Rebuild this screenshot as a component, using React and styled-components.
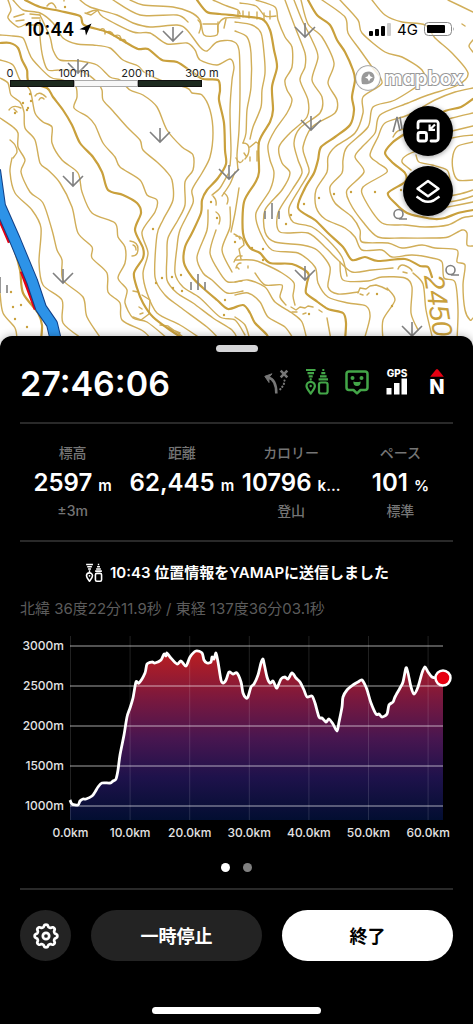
import React from 'react';
import styled, { createGlobalStyle } from 'styled-components';

const GlobalStyle = createGlobalStyle`
  * { box-sizing: border-box; }
  body {
    margin: 0;
    background: #000;
    font-family: Inter, "Noto Sans CJK JP", sans-serif;
  }
  button { font-family: inherit; cursor: pointer; }
`;

const green = '#43a648';
const red = '#e60012';
const contour = '#c9a03c';
const grey = '#757575';

const Screen = styled.div`
  display: flex;
  flex-direction: column;
  min-height: 100vh;
`;

const MapArea = styled.section`
  position: relative;
  flex: 1 0 348px;
  margin-bottom: -12px;
  background: #fff;
  overflow: hidden;
`;

const MapDrawing = styled.svg`
  position: absolute;
  inset: 0;
  width: 100%;
  height: 100%;
`;

const StatusBar = styled.div`
  position: relative;
  display: flex;
  align-items: center;
  justify-content: space-between;
  height: 58px;
  padding: 0 18px 0 25px;
  color: #000;
`;

const Clock = styled.div`
  display: flex;
  align-items: center;
  gap: 5px;
  font-size: 18px;
  font-weight: 600;
`;

const Signal = styled.div`
  display: flex;
  align-items: center;
  gap: 6px;
  font-size: 15px;
`;

const MapTop = styled.div`
  position: relative;
  display: flex;
  justify-content: space-between;
  padding: 6px 10px 0 10px;
`;

const ScaleBar = styled.div`
  display: flex;
  padding-top: 2px;
`;

const Segment = styled.div`
  width: 64px;
  font-size: 11px;
  line-height: 14px;
  color: #222;
  span {
    display: block;
    width: 64px;
    margin-left: -32px;
    text-align: center;
    white-space: nowrap;
    text-shadow: 0 0 2px #fff, 0 0 2px #fff;
  }
  &::after {
    content: '';
    display: ${({ last }) => last ? 'none' : 'block'};
    height: 5px;
    border: 1px solid ${({ dark }) => dark ? '#111' : '#aaa'};
    background: ${({ dark }) => dark ? '#1d2a1f' : '#f7f7f7'};
  }
`;

const Mapbox = styled.a`
  display: flex;
  align-items: center;
  gap: 3px;
  height: 28px;
  color: #fff;
  text-decoration: none;
  font-size: 20px;
  font-weight: 600;
  font-feature-settings: "cv11";
  -webkit-text-stroke: 2px #999;
  paint-order: stroke fill;
`;

const MapButtons = styled.div`
  position: relative;
  display: flex;
  flex-direction: column;
  align-items: flex-end;
  gap: 10px;
  padding: 14px 20px 0;
`;

const MapButton = styled.button`
  display: flex;
  align-items: center;
  justify-content: center;
  width: 50px;
  height: 50px;
  padding: 0;
  border: 0;
  border-radius: 50%;
  background: #000;
  box-shadow: 0 1px 5px rgba(0, 0, 0, 0.4);
`;

const Sheet = styled.main`
  position: relative;
  padding: 9px 20px 10px;
  border-radius: 12px 12px 0 0;
  background: #000;
  color: #fff;
  box-shadow: 0 0 8px rgba(0, 0, 0, 0.3);
`;

const Handle = styled.div`
  width: 42px;
  height: 7px;
  margin: 0 auto;
  border-radius: 4px;
  background: #d5d5d7;
`;

const Header = styled.header`
  display: flex;
  align-items: center;
  justify-content: space-between;
  height: 70px;
  border-bottom: 2px solid #292929;
  box-sizing: content-box;
`;

const Timer = styled.div`
  padding-bottom: 8px;
  font-size: 34px;
  font-weight: 600;
`;

const StatusIcons = styled.div`
  display: flex;
  gap: 12px;
  padding: 0 2px 10px 0;
  svg { overflow: visible; }
`;

const Stats = styled.dl`
  display: grid;
  grid-template-columns: repeat(4, minmax(0, 1fr));
  height: 116px;
  margin: 0 -2px;
  padding-top: 16px;
  text-align: center;
`;

const Stat = styled.div`
  display: flex;
  flex-direction: column;
  align-items: center;
`;

const Label = styled.dt`
  font-size: 14px;
  font-weight: 500;
  line-height: 26px;
  color: ${grey};
`;

const Value = styled.dd`
  margin: 0;
  font-size: 24px;
  font-weight: 600;
  line-height: 34px;
  white-space: nowrap;
  small { font-size: 15px; }
`;

const Note = styled.dd`
  margin: 0;
  font-size: 14px;
  font-weight: 500;
  line-height: 16px;
  color: ${grey};
`;

const Rule = styled.hr`
  height: 2px;
  margin: 0;
  border: 0;
  background: #292929;
`;

const Message = styled.p`
  display: flex;
  align-items: center;
  justify-content: center;
  gap: 6px;
  margin: 19px 0 0;
  font-size: 15px;
  font-weight: 600;
  line-height: 24px;
  white-space: nowrap;
`;

const Coordinates = styled.p`
  margin: 13px 0 0;
  font-size: 15px;
  line-height: 22px;
  color: #5c5c5c;
`;

const Chart = styled.svg`
  display: block;
  width: 100%;
  margin-top: 10px;
  text {
    font-size: 12px;
    font-weight: 500;
    fill: #e4e4e4;
  }
`;

const Pager = styled.div`
  display: flex;
  justify-content: center;
  gap: 13px;
  padding: 19px 0 16px;
`;

const Dot = styled.button`
  width: 9px;
  height: 9px;
  padding: 0;
  border: 0;
  border-radius: 50%;
  background: ${({ active }) => active ? '#fff' : '#808080'};
`;

const Actions = styled.div`
  display: flex;
  gap: 20px;
  padding: 20px 0 46px;
`;

const RoundButton = styled.button`
  display: flex;
  align-items: center;
  justify-content: center;
  flex: none;
  width: 51px;
  height: 51px;
  padding: 0;
  border: 0;
  border-radius: 50%;
  background: #232323;
`;

const PillButton = styled.button`
  flex: 1;
  height: 51px;
  padding: 0 0 2px;
  border: 0;
  border-radius: 26px;
  font-size: 18px;
  font-weight: 600;
  background: ${({ primary }) => primary ? '#fff' : '#232323'};
  color: ${({ primary }) => primary ? '#000' : '#fff'};
`;

const HomeIndicator = styled.div`
  width: 169px;
  height: 7px;
  margin: 0 auto;
  border-radius: 4px;
  background: #fff;
`;

// Smooth curve through a list of "x,y" points
const curve = list => {
  const p = list.split(' ').map(s => s.split(',').map(Number));
  let d = `M${p[0]}`;
  for (let i = 0; i < p.length - 1; i++) {
    const a = p[i - 1] || p[i], b = p[i], c = p[i + 1], e = p[i + 2] || c;
    const c1 = [b[0] + (c[0] - a[0]) / 7, b[1] + (c[1] - a[1]) / 7];
    const c2 = [c[0] - (e[0] - b[0]) / 7, c[1] - (e[1] - b[1]) / 7];
    d += `C${c1} ${c2} ${c}`;
  }
  return d;
};

const mainContours = [
  '25,0 40,7 60,11 80,16 84,25 107,32 125,42 138,49 148,49 162,60 177,62 192,72 203,79 218,80 220,90 219,100 224,123 225,150 226,164 218,178 207,190 202,200 201,213 192,233 185,247 184,263 192,277 203,288 217,300 228,309 243,305 250,313 255,323 267,335 270,345',
  '0,43 10,43 18,48 22,60 27,70 29,82 47,88 53,97 63,110 72,125 80,143 93,157 102,172 108,190 123,195 137,203 141,213 135,230 143,248 143,258 134,273 137,288 143,303 153,317 170,330 184,339',
  '197,0 207,12 220,14 240,16 262,19 270,30 274,50 277,67 272,87 273,110 270,122 259,142 259,172 255,183 244,202 243,233 250,248 260,253 270,263 292,264 308,273 307,283 306,293 315,300 328,309 343,313 346,323 345,340',
  '308,0 317,15 330,25 337,40 345,52 353,70 355,80 352,97 354,110 350,125 335,137 321,147 318,160 314,173 305,188 298,208 315,220 328,233 343,247 352,260 365,257 378,261 405,259 420,266 428,267 432,277',
  '473,99 461,107 445,111 425,122 403,135 392,143 385,153 393,163 405,173 405,182 388,193 395,203 407,213 422,217 435,219 445,218 458,213 473,210',
  '0,222 13,247 20,270 23,293 38,313 42,325 41,340'
];

const contours = [
  '13,0 23,10 40,13 53,23 63,38 77,44 93,45 110,48 123,60 138,66 144,72 160,80 187,88 192,93 202,95 210,110 213,133 210,157 202,173 192,190 193,203 180,230 177,247 175,273 183,287 200,298 220,317 235,320 245,335',
  '40,15 50,37 53,50 60,60 80,61 97,65 110,77 120,80 130,90 143,95 157,107 167,130 182,147 193,155 193,170 185,182 185,205 178,220 168,238 167,255 167,280 177,293 193,303 213,318 232,330 238,340',
  '40,20 40,37 43,58 48,70 60,70 83,72 97,82 102,90 103,100 112,110 127,127 140,140 143,150 157,162 166,171 172,180 173,200 163,220 157,235 155,277 165,295 180,307 207,327 220,340',
  '0,35 13,36 23,38 28,50 33,60 50,77 62,80 75,85 77,97 74,108 88,117 95,125 103,143 115,157 120,167 140,180 147,195 157,200 155,212 142,232 148,253 143,273 147,293 157,313 180,325 203,340',
  '0,60 13,65 20,80 30,90 35,113 43,122 52,127 52,143 62,160 78,173 82,192 92,213 115,223 118,237 125,247 125,263 118,278 127,290 125,303 133,318 147,322 167,338',
  '0,78 8,83 11,95 20,102 24,112 25,128 35,140 40,163 48,170 60,183 72,207 78,233 92,247 92,258 107,273 108,292 120,303 122,320 143,331 152,340',
  '0,118 13,127 18,133 18,147 25,160 21,172 30,192 43,203 52,230 57,250 62,260 63,280 83,297 87,317 102,340',
  '12,158 10,172 15,193 32,210 41,228 39,262 43,285 62,300 63,323 84,340',
  '0,293 3,313 15,328 17,340',
  '87,13 97,10 103,17 133,32 150,33 167,44 187,43 195,50 200,60 217,65 230,59 234,67 232,80 230,110 231,150 230,166',
  '80,0 90,7 117,15 133,23 150,27 177,25 187,30 200,47 207,51 217,42 232,41 239,50 240,90 239,130 237,155 238,170',
  '113,0 140,15 177,15 188,22',
  '130,0 143,5 173,7 190,12 200,20 204,35 217,35 218,25 225,18 240,18',
  '213,0 227,6 238,10 240,14',
  '235,22 252,25 261,33 264,53 265,73 262,90 261,107 253,127 250,139',
  '235,31 247,37 251,53 251,87 247,110 246,133 243,143',
  '240,3 256,6 265,16 276,16',
  '256,0 275,7 278,20 285,37 292,47 292,67 285,80 287,90 292,100 287,113 275,130 268,145 270,160 274,173 270,190 256,213 260,232 272,250 298,253 315,267 318,283 328,297 348,303 366,306 370,317 364,340',
  '285,0 295,27 305,53 305,67 300,80 308,100 307,117 290,133 279,147 282,163 290,173 282,190 265,210 265,232 275,242 302,245 317,250 330,267 328,287 338,294 358,292',
  '294,0 302,20 312,40 318,57 312,80 322,97 320,113 300,128 294,143 298,160 302,173 292,190 278,213 280,232 308,233 325,247 338,260 352,272 372,270 393,268',
  '301,0 308,24 322,37 334,63 328,83 337,100 335,113 312,127 303,147 306,160 309,172 300,188 289,208 293,222 312,227 328,240 342,257 347,276',
  '322,0 345,17 348,33 360,50 372,67 382,83 363,97 363,113 355,133 335,147 328,157 327,172 316,190 316,207 325,219 345,228 355,237 362,250 382,250 392,257 412,255 432,258 442,262 444,278 455,282 458,310 457,340',
  '340,0 358,20 362,33 385,52 402,57 422,70 422,82 395,100 373,107 368,127 347,147 343,160 342,173 330,187 335,203 352,217 360,230 362,242 388,243 402,248 422,245 435,248 457,250 457,262 465,265 463,285 465,310 470,320 473,318',
  '372,0 385,15 402,22 425,25 435,38 452,53 468,73 458,85 428,95 408,103 380,115 375,133 362,147 355,157 364,172 347,190 350,203 363,222 378,237 402,238 432,238 448,237 462,230 467,233 467,245 473,246',
  '448,0 473,12',
  '473,40 469,46 473,52',
  '473,88 455,92 435,100 408,115 385,123 378,137 370,155 378,163 387,172 363,187 365,200 382,223 405,225 425,227 448,225 462,218 473,216',
  '473,113 452,118 430,125 400,130 393,137',
  '473,126 452,131',
  '473,135 452,138 425,148 407,155 402,162 411,170',
  '473,142 458,146 453,155 453,170 458,180 473,180',
  '416,155 419,162 432,165 447,170 450,180',
  '448,196 460,194 473,190',
  '448,202 460,200 473,196',
  '442,208 458,205 473,202',
  '235,282 248,280 265,287 275,302 292,313 302,322 307,340',
  '235,295 248,293 260,302 268,317 285,327 294,340',
  '235,317 245,325 250,340',
  '235,260 252,260 262,263 282,273 294,283 293,296 295,305',
  '255,273 265,285 282,285 280,297 286,305',
  '340,262 343,280 368,281 382,277 405,278 412,287 411,313 418,330',
  '387,288 395,300 383,320 383,340',
  '413,273 423,284 426,310 433,340',
  '327,318 331,340',
  '208,210 207,230 197,257 203,273 212,280 227,293 243,291',
  '216,230 210,253 220,273 228,282 242,281',
  '230,207 230,227 222,250 232,272',
  '239,188 235,213 231,232',
  '222,196 230,184 235,172',
  '212,195 220,188 228,174',
  '8,0 11,10 8,18 18,27 26,24',
  '10,140 15,145 17,152 13,158'
];

// short hachures, rock edges and hollows
const marks = 'M47,6q5-7 9,2M64,0v1M85,13l6,2 7-5M100,30q5-4 5,4M105,33q6-4 9,3M114,36q7-3 7,4M120,40q6-2 6,3'
  + 'M14,17l10,-3M16,21l8-1M30,14l10,1M32,18l8,0M27,25h13M35,96q4-6 11,1M39,100q2-4 5-1M9,110q4-6 12-2M14,109l3,3'
  + 'M130,241q8,1 8,8t-6,7M133,245q3,1 3,5M133,291l5,1M142,295l8,5-1,14-8,6-8-3M139,307l3,2M140,314l3-1M160,325l8,1 14,10M168,328l12,5'
  + 'M213,196q4,4 3,9M216,212q6,4 3,12M224,193q6,4 3,11M234,234q5,2 6,5M234,262q3-8 8-6M236,268q1-5 5-5'
  + 'M198,20q5,4 1,13M203,24h14M218,32v-10M224,28l2-9M238,11v5M243,11v6M249,12v6M257,12v7M264,13v7M270,11v8'
  + 'M243,143q6,0 6,6t-4,10M250,147l6,-5 3,2M244,153l2,3M250,157v4M257,151v10M236,158q4,8 7,2'
  + 'M236,236q8,0 8,9l-5,4 2,10M237,267l2,2M248,266v2M291,307l5,3 4-3 5,1 3-2 5,1M292,312h5M303,314l3-1M319,310l3,2M319,303l6,4'
  + 'M358,293l2-5 6,1 4-3 6-1 6,2 6,3M360,294l3,1M367,295l2-2M398,269q2-6 8-3t6,5M403,272l4,1M465,26l-3-2';

const dots = '23,103 28,108 31,101 27,110 15,113 30,94 65,7 153,229 162,278 172,277 181,275 173,288 182,291 211,202 217,218 156,283 225,300 224,315 13,307 21,305 15,319 27,327 11,292 304,204 319,198 334,194 351,192 375,192 291,215 286,224 263,249 263,260 401,190 235,242 252,248 309,314 377,294 392,306';

const grass = [[173, 34], [78, 66], [160, 135], [73, 179], [229, 172], [63, 276], [305, 30], [311, 123], [305, 273], [412, 329]];
const reeds = [[198, 282], [272, 211], [0, 285]];
const broadleaf = [[399, 214], [451, 270]];
const river = 'M-5,170L0,206 15,240 32,281 41,308 52,324 57,345';

const profile = '70,800 72,804 78,805 80,801 83,799 86,799 92,796 95,792 98,787 102,783 110,783 113,781 116,779 118,770 120,755 124,735 127,717 130,708 133,698 136,682 139,683 145,673 147,664 152,662 155,663 161,660 164,654 166,656 167,653 170,657 177,664 181,661 186,666 190,657 196,651 202,653 204,660 207,663 211,662 212,657 214,659 216,653 218,662 221,680 223,683 226,680 229,672 233,674 237,673 241,682 243,693 246,698 248,697 251,687 254,684 258,675 261,663 263,659 264,663 267,677 270,683 273,681 275,685 277,688 281,679 285,677 288,679 292,673 296,678 300,682 304,690 307,697 312,696 315,703 319,717 322,718 326,722 329,719 333,724 337,731 339,722 342,707 343,697 347,690 353,685 358,682 362,680 366,687 368,693 371,703 376,714 379,714 382,717 387,714 389,705 393,702 395,697 400,688 403,682 406,668 408,673 411,687 414,694 418,687 422,673 425,667 428,672 432,677 437,678 443,678';

const elevations = [3000, 2500, 2000, 1500, 1000];
const distances = [0, 10, 20, 30, 40, 50, 60];

const stats = [
  { label: '標高', value: '2597', unit: 'm', note: '±3m' },
  { label: '距離', value: '62,445', unit: 'm' },
  { label: 'カロリー', value: '10796', unit: 'k...', note: '登山' },
  { label: 'ペース', value: '101', unit: '%', note: '標準' }
];

const TopoMap = () => (
  <MapDrawing viewBox="0 0 473 348" preserveAspectRatio="xMidYMin slice" fill="none" aria-hidden="true">
    <g stroke={contour} strokeLinejoin="round" strokeLinecap="round">
      <g strokeWidth="1.400" opacity="0.85">
        {contours.map((c, i) => <path key={i} d={curve(c)} />)}
        <path d={marks} />
      </g>
      <g strokeWidth="2.200">
        {mainContours.map((c, i) => <path key={i} d={curve(c)} />)}
      </g>
    </g>
    <g fill={contour}>
      {dots.split(' ').map(p => <circle key={p} cx={p.split(',')[0]} cy={p.split(',')[1]} r="1.200" />)}
    </g>
    <text transform="translate(424 276) rotate(81)" fill={contour} fontFamily="Liberation Sans" fontStyle="italic" fontSize="28">2450</text>
    <g stroke="#808080" strokeWidth="1.600">
      {grass.map(([x, y], i) => <path key={i} transform={`translate(${x} ${y})`} d="M0,-7V7M-10,-3L0,7L10,-3" />)}
      {reeds.map(([x, y], i) => <path key={i} transform={`translate(${x} ${y})`} d="M0,-8V8M-7,0V8M7,0V8" />)}
      {broadleaf.map(([x, y], i) => <path key={i} transform={`translate(${x} ${y})`} d="M4,0a4.5,4.5 0 1 0-9,0a4.5,4.5 0 1 0 9,0M0,5H8" />)}
      <path d="M393,132l4-15 3,14M400,117l2,12" />
    </g>
    <path d="M-2,206L13,241M25,270L39,308" stroke={red} strokeWidth="11" />
    <path d={river} stroke="#123f86" strokeWidth="12" strokeLinejoin="round" />
    <path d={river} stroke="#2d93e8" strokeWidth="10" strokeLinejoin="round" />
  </MapDrawing>
);

const BeaconIcon = ({ size = 28, color = green }) => (
  <svg width={size} height={size} viewBox="0 0 28 28" fill="none" stroke={color} strokeWidth="2.200" aria-hidden="true">
    <path d="M3,2h9.500M4.500,5.200h6.500M5.700,8.400h4M6.700,11.400h2M19.300,2h2M18.300,5.200h4M17,8.400h6.600M15.600,11.400h9.400" />
    <path d="M7.700,25.500C5.500,22.500 3.500,20.500 3.500,18a4.200,4.200 0 0 1 8.400,0C11.900,20.500 9.900,22.500 7.700,25.500Z" strokeLinejoin="round" />
    <circle cx="7.700" cy="18" r="1.200" fill={color} stroke="none" />
    <rect x="16" y="14.500" width="8.600" height="11" rx="2" />
  </svg>
);

const RouteIcon = () => (
  <svg width="28" height="28" viewBox="0 0 28 28" fill="none" stroke="#777" strokeWidth="2.600" aria-hidden="true">
    <path d="M5,9.500C10,10.500 13.300,15 13.300,25.500" />
    <path d="M1.800,8.300L9,5.800 5.800,9.600 6,14.500Z" fill="#777" strokeWidth="1" strokeLinejoin="round" />
    <path d="M17.700,2.700l6.600,6.600M24.300,2.700l-6.600,6.600" />
    <path d="M21.500,12.500C21.500,17.500 18,20 15.500,23.500" strokeWidth="2.200" strokeLinecap="round" strokeDasharray="0.100 3.200" />
  </svg>
);

const FaceIcon = () => (
  <svg width="28" height="28" viewBox="0 0 28 28" fill="none" aria-hidden="true">
    <path d="M6,3.500H22A2.500,2.500 0 0 1 24.500,6V19.500A2.500,2.500 0 0 1 22,22H17.500L14,25.300 10.500,22H6A2.500,2.500 0 0 1 3.500,19.500V6A2.500,2.500 0 0 1 6,3.500Z" stroke={green} strokeWidth="2.500" strokeLinejoin="round" />
    <circle cx="9.500" cy="10" r="2" fill={green} />
    <circle cx="18.500" cy="10" r="2" fill={green} />
    <path d="M10.300,13.500q3.700,1 7.400,0a3.700,4.500 0 0 1-7.400,0Z" fill={green} />
  </svg>
);

const GpsIcon = () => (
  <svg width="28" height="28" viewBox="0 0 28 28" fill="#fff" aria-label="GPS">
    <text x="14" y="9" textAnchor="middle" fontSize="10" fontWeight="800">GPS</text>
    <rect x="3.500" y="20" width="5" height="6.500" />
    <rect x="11" y="15" width="5.500" height="11.500" />
    <rect x="18.500" y="10.500" width="5.500" height="16" />
  </svg>
);

const NorthIcon = () => (
  <svg width="28" height="28" viewBox="0 0 28 28" fill="#fff" aria-label="N">
    <path d="M13,1.500q1-.8 2,0L20.800,8.700H7.200Z" fill={red} />
    <text x="14" y="26" textAnchor="middle" fontSize="20" fontWeight="800">N</text>
  </svg>
);

const gear = (() => {
  const pts = [];
  for (let i = 0; i <= 96; i++) {
    const a = i / 96 * Math.PI * 2;
    const r = 10.2 + 1.2 * Math.tanh(1.8 * Math.cos(8 * a));
    pts.push(`${(14 + r * Math.sin(a)).toFixed(2)},${(14 - r * Math.cos(a)).toFixed(2)}`);
  }
  return `M${pts.join('L')}Z`;
})();

const ElevationChart = () => {
  const line = curve(profile);
  return (
    <Chart viewBox="20 630 433 214" role="img" aria-label="標高">
      <defs>
        <linearGradient id="altitude" gradientUnits="userSpaceOnUse" x1="0" y1="650" x2="0" y2="820">
          <stop offset="0" stopColor="#bd1e20" />
          <stop offset="0.3" stopColor="#77183f" />
          <stop offset="0.52" stopColor="#481650" />
          <stop offset="0.75" stopColor="#1e124b" />
          <stop offset="1" stopColor="#020e31" />
        </linearGradient>
      </defs>
      <path d={`${line}V820H70Z`} fill="url(#altitude)" />
      {distances.map((km, i) => (
        <g key={km}>
          <rect x={70 + i * 59.6} y="636" width="1" height="184" fill="#fff" opacity="0.13" />
          <text x={70.5 + i * 59.6} y="837" textAnchor="middle">{km.toFixed(1)}km</text>
        </g>
      ))}
      {elevations.map((m, i) => (
        <g key={m}>
          <rect x="70" y={645 + i * 40} width="373" height="2" fill="#fff" opacity="0.32" />
          <text x="64" y={650 + i * 40} textAnchor="end">{m}m</text>
        </g>
      ))}
      <path d={line} fill="none" stroke="#fff" strokeWidth="2.800" strokeLinejoin="round" />
      <circle cx="443" cy="678" r="7.500" fill={red} stroke="#fff" strokeWidth="2.500" />
    </Chart>
  );
};

const App = () => (
  <React.Fragment>
    <GlobalStyle />
    <Screen>
      <MapArea>
        <TopoMap />
        <StatusBar>
          <Clock>
            10:44
            <svg width="13" height="13" viewBox="0 0 13 13" aria-hidden="true"><path d="M12.500,.5L7,12.500 6,7 .5,6.200Z" /></svg>
          </Clock>
          <Signal>
            <svg width="22" height="13" viewBox="0 0 22 13" aria-hidden="true">
              <rect y="8" width="4" height="5" rx="1" />
              <rect x="6" y="6" width="4" height="7" rx="1" />
              <rect x="12" y="3" width="4" height="10" rx="1" />
              <rect x="18" width="4" height="13" rx="1" fill="#ccc" />
            </svg>
            4G
            <svg width="31" height="14" viewBox="0 0 31 14" aria-hidden="true">
              <rect x=".5" y=".5" width="27" height="13" rx="4" fill="#fff" fillOpacity=".5" stroke="#888" />
              <rect x="3" y="3" width="18" height="8" rx="1" />
              <path d="M29,5q1.500,2 0,4Z" fill="#888" />
            </svg>
          </Signal>
        </StatusBar>
        <MapTop>
          <ScaleBar>
            <Segment dark><span>0</span></Segment>
            <Segment><span>100 m</span></Segment>
            <Segment dark><span>200 m</span></Segment>
            <Segment last><span>300 m</span></Segment>
          </ScaleBar>
          <Mapbox href="#mapbox">
            <svg width="26" height="26" viewBox="0 0 26 26" aria-hidden="true">
              <circle cx="13" cy="13" r="12" fill="#fff" fillOpacity=".8" stroke="#999" strokeWidth="1.500" />
              <path d="M7,19C5,11 8,6.500 14,6.500a5.800,5.800 0 0 1 5.500,6C19,18 14,20 7,19Z" fill="#999" />
              <path d="M14,8.500l1.300,2.700 2.700,1.300-2.700,1.300L14,16.500l-1.300-2.700L10,12.500l2.700-1.300Z" fill="#fff" />
            </svg>
            mapbox
          </Mapbox>
        </MapTop>
        <MapButtons>
          <MapButton aria-label="縮小">
            <svg width="24" height="24" viewBox="0 0 24 24" fill="none" stroke="#fff" strokeWidth="2.800" aria-hidden="true">
              <path d="M2,9V4.500A2.500,2.500 0 0 1 4.500,2H20A2.200,2.200 0 0 1 22.200,4.200V19.800A2.200,2.200 0 0 1 20,22H15" strokeLinecap="round" />
              <rect x="2" y="13.500" width="8.500" height="8.500" rx="2" />
              <path d="M19,5.500L14,10.500M13.600,5.500V10.900H19" strokeWidth="2.200" />
            </svg>
          </MapButton>
          <MapButton aria-label="レイヤー">
            <svg width="26" height="26" viewBox="-1 0 26 26" fill="none" stroke="#fff" strokeWidth="2.500" strokeLinejoin="round" strokeLinecap="round" aria-hidden="true">
              <path d="M12,3L22.500,10.700 12,18.300 1.500,10.700Z" />
              <path d="M.5,18.500L6.500,22.500q5.500,2.600 11,0L23.500,18.500" strokeLinecap="butt" />
            </svg>
          </MapButton>
        </MapButtons>
      </MapArea>
      <Sheet>
        <Handle />
        <Header>
          <Timer>27:46:06</Timer>
          <StatusIcons>
            <RouteIcon />
            <BeaconIcon />
            <FaceIcon />
            <GpsIcon />
            <NorthIcon />
          </StatusIcons>
        </Header>
        <Stats>
          {stats.map(({ label, value, unit, note }) => (
            <Stat key={label}>
              <Label>{label}</Label>
              <Value>{value} <small>{unit}</small></Value>
              {note && <Note>{note}</Note>}
            </Stat>
          ))}
        </Stats>
        <Rule />
        <Message><BeaconIcon size={20} color="#fff" />10:43 位置情報をYAMAPに送信しました</Message>
        <Coordinates>北緯 36度22分11.9秒 / 東経 137度36分03.1秒</Coordinates>
        <ElevationChart />
        <Pager>
          <Dot active aria-label="1" />
          <Dot aria-label="2" />
        </Pager>
        <Rule />
        <Actions>
          <RoundButton aria-label="設定">
            <svg width="28" height="28" viewBox="0 0 28 28" fill="none" stroke="#fff" strokeWidth="2.700" aria-hidden="true">
              <path d={gear} strokeLinejoin="round" />
              <circle cx="14" cy="14" r="3.200" />
            </svg>
          </RoundButton>
          <PillButton>一時停止</PillButton>
          <PillButton primary>終了</PillButton>
        </Actions>
        <HomeIndicator />
      </Sheet>
    </Screen>
  </React.Fragment>
);

export default App;
